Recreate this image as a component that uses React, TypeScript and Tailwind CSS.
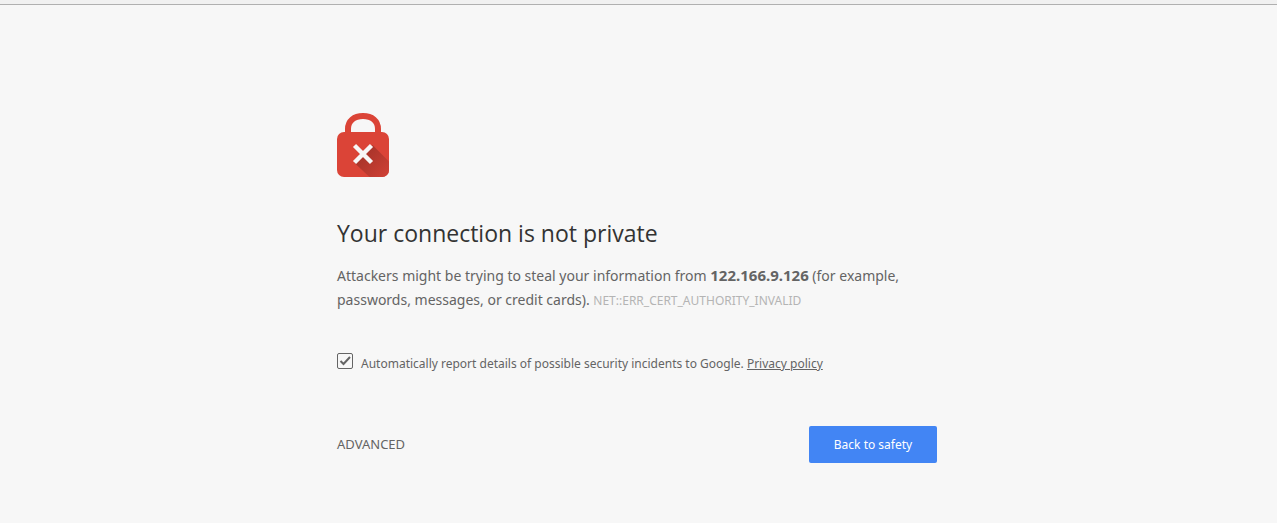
import { useState } from "react";

function LockIcon() {
  return (
    <svg width="52" height="64" viewBox="0 0 52 64" aria-hidden="true" className="block">
      <defs>
        <linearGradient id="shade" x1="26" y1="40" x2="50" y2="64" gradientUnits="userSpaceOnUse">
          <stop offset="0" stopColor="#a8342a" />
          <stop offset="1" stopColor="#cf4035" />
        </linearGradient>
      </defs>
      <path d="M11 24V16C11 8 17 3 26 3s15 5 15 13v8" fill="none" stroke="#db4437" strokeWidth="6" />
      <rect y="19" width="52" height="45" rx="7" fill="#db4437" />
      <path d="M35.5 32 52 48.500V57a7 7 0 0 1-7 7H32.500L17 49.500z" fill="url(#shade)" />
      <path d="m17.500 32.500 17 17m0-17-17 17" stroke="#f7f7f7" strokeWidth="4.400" />
    </svg>
  );
}

export default function App() {
  const [report, setReport] = useState(true);
  return (
    <div className="min-h-screen bg-[#f7f7f7] font-['Noto_Sans','Open_Sans',sans-serif] text-sm text-[#646464]">
      <div className="h-[5px] border-b border-[#b0b0b0] bg-[#f1f1f1]" />
      <div className="pr-[3px]">
        <main className="mx-auto max-w-[600px] pt-[108px]">
          <LockIcon />
          <h1 className="mt-10 font-['Open_Sans','Noto_Sans',sans-serif] text-[23px] leading-8 text-[#333]">
            Your connection is not private
          </h1>
          <p className="mt-[15px] leading-6">
            Attackers might be trying to steal your information from{" "}
            <strong className="text-[15px] leading-5 font-bold">122.166.9.126</strong> (for example, passwords, messages, or
            credit cards). <span className="text-xs text-[#b4b4b4]">NET::ERR_CERT_AUTHORITY_INVALID</span>
          </p>
          <div className="mt-[42px] flex items-center gap-2 text-xs leading-5">
            <span className="relative -mt-1.5 size-4 shrink-0">
              <input
                id="report"
                type="checkbox"
                checked={report}
                onChange={(e) => setReport(e.target.checked)}
                className="block size-4 appearance-none rounded-xs border border-[#646464]"
              />
              {report && (
                <svg viewBox="0 0 16 16" aria-hidden="true" className="pointer-events-none absolute inset-0 size-4">
                  <path d="m3.500 8 3 3 6.500-7" fill="none" stroke="#646464" strokeWidth="2" />
                </svg>
              )}
            </span>
            <p>
              <label htmlFor="report">
                Automatically report details of possible security incidents to Google.
              </label>{" "}
              <a href="#privacy" className="underline">Privacy policy</a>
            </p>
          </div>
          <div className="mt-[52px] flex items-center justify-between text-[13px]">
            <button type="button">ADVANCED</button>
            <button type="button" className="rounded-xs bg-[#4285f4] px-[23px] py-2 text-xs leading-[21px] text-white min-w-32">
              Back to safety
            </button>
          </div>
        </main>
      </div>
    </div>
  );
}
